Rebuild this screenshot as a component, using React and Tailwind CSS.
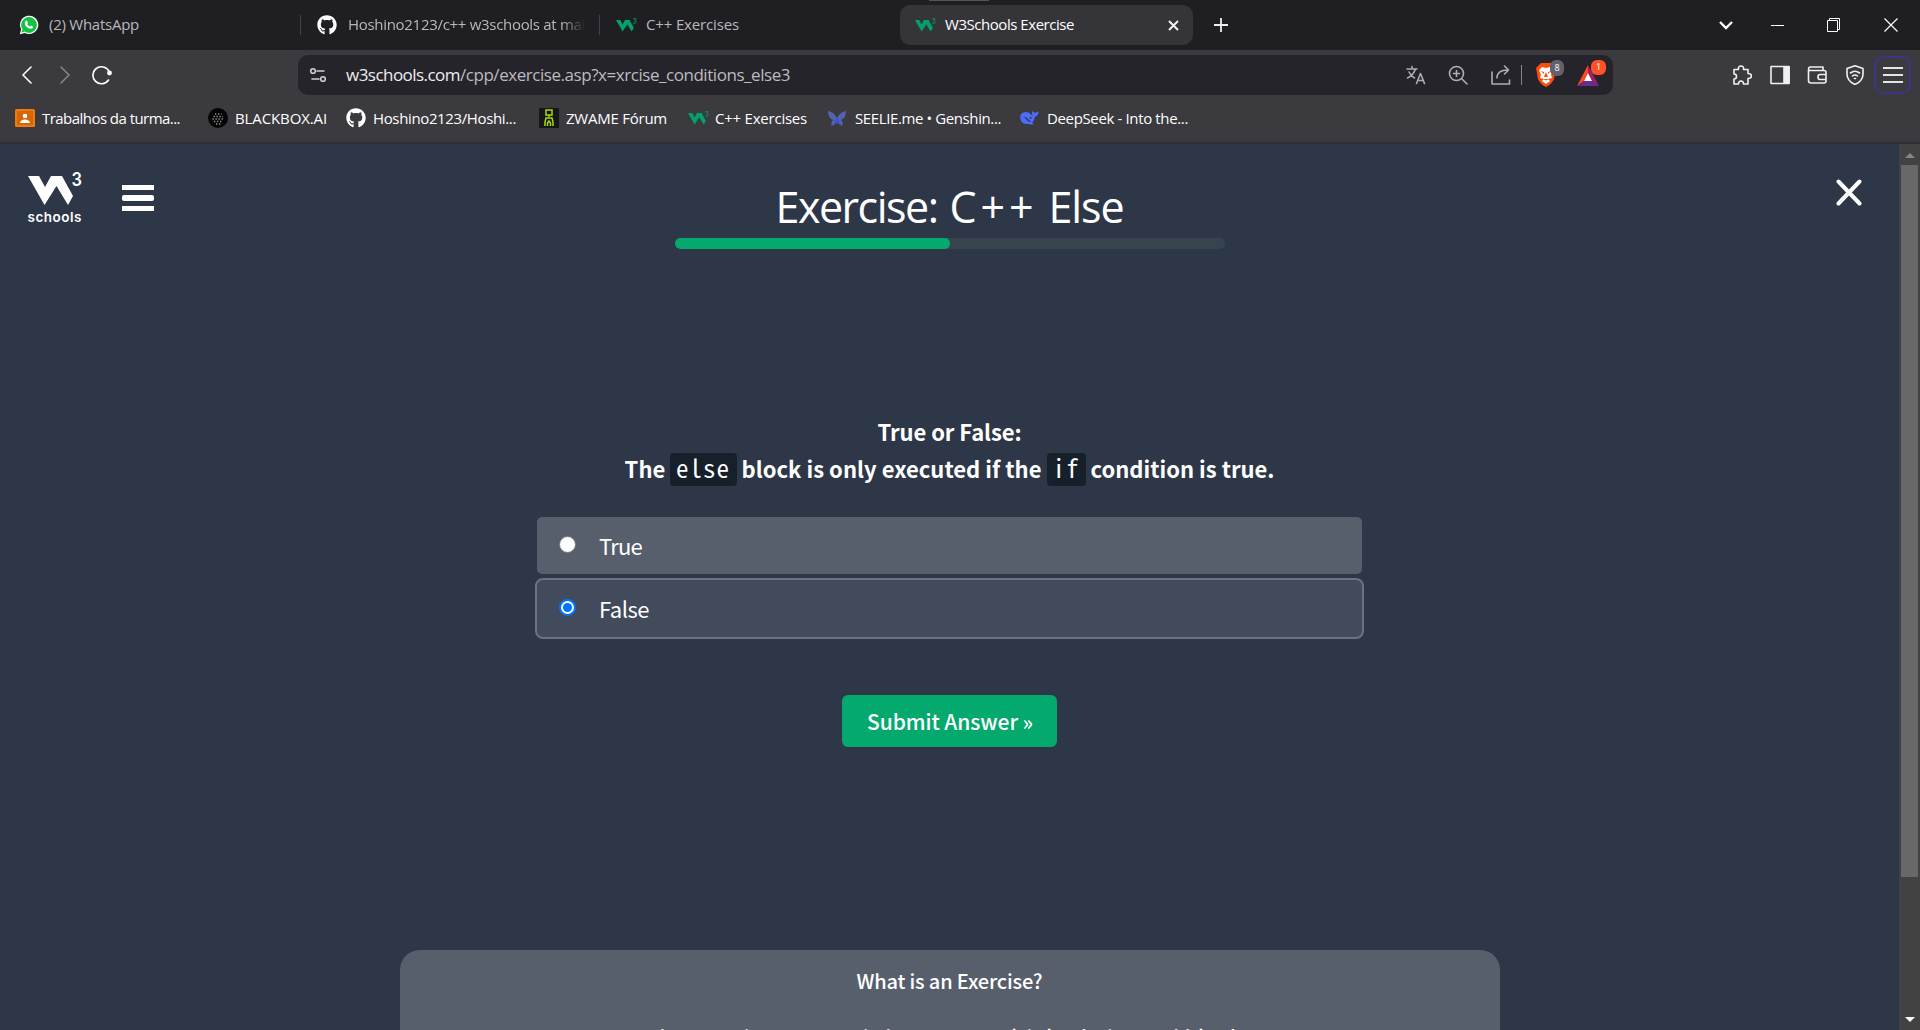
import React, { useLayoutEffect, useRef } from "react";
import { FaGithub } from "react-icons/fa";

const ui = "font-['Open_Sans','Noto_Sans',sans-serif]";
const body = "font-['Noto_Sans_CJK_SC','Noto_Sans',sans-serif]";

// Spreads the tracking of a single line so that it fills the given width.
function Fit({ w, className = "", children }) {
  const ref = useRef(null);
  useLayoutEffect(() => {
    const el = ref.current;
    const apply = () => {
      el.style.letterSpacing = "0px";
      const n = el.textContent.length;
      el.style.letterSpacing = `${(w - el.getBoundingClientRect().width) / n}px`;
    };
    apply();
    document.fonts.ready.then(apply);
  }, [w]);
  return (
    <span ref={ref} className={`inline-block shrink-0 whitespace-pre ${className}`}>
      {children}
    </span>
  );
}

const W3Mark = ({ className = "" }) => (
  <svg viewBox="0 0 54 36" className={`shrink-0 ${className}`} fill="#04a06b">
    <path d="M0 5H11L17 17L23 5H35L46 26L40 35L29 16L17 35Z" />
    <path d="M44 2H52L48 7Q53 8 52 11Q50 15 44 13" fill="none" stroke="#04a06b" strokeWidth="2.2" />
  </svg>
);

function Tabs() {
  return (
    <div className={`flex h-[50px] items-center bg-[#1f1e23] text-[15px] text-[#b9b8bc] ${ui}`}>
      <div className="flex w-[300px] items-center pl-[19px]">
        <svg viewBox="0 0 24 24" className="size-5">
          <path d="M1 23l1.6-5.8A11 11 0 1 1 7 21.500Z" fill="#fff" />
          <circle cx="12" cy="12" r="9.500" fill="#12c143" />
          <path d="M3 21l1-4 3 3Z" fill="#12c143" />
          <path d="M8 7l1.500-.3 1.300 3-1 1.200q1.200 2 3.300 3l1.200-1.200 2.800 1.300q-.2 2.500-2.800 2.600Q8 15.500 7 10.500 6.800 8.500 8 7Z" fill="#fff" />
        </svg>
        <Fit w={90} className="mb-[2px] ml-[10px]">(2) WhatsApp</Fit>
      </div>
      <div className="h-5 w-px bg-[#424147]" />
      <div className="flex w-[298px] items-center pl-4">
        <FaGithub className="size-5 shrink-0 text-white" />
        <div className="mb-[2px] ml-[11px] w-[237px] overflow-hidden [mask-image:linear-gradient(to_right,black_90%,transparent)]">
          <Fit w={246}>Hoshino2123/c++ w3schools at main</Fit>
        </div>
      </div>
      <div className="h-5 w-px bg-[#424147]" />
      <div className="flex w-[300px] items-center pl-4">
        <W3Mark className="h-[14px] w-[21px]" />
        <Fit w={93} className="mb-[2px] ml-[9px]">C++ Exercises</Fit>
      </div>
      <div className="relative flex h-10 w-[293px] items-center rounded-[10px] bg-[#353439] pl-[15px] text-white">
        <div className="absolute -top-[5px] left-[29px] h-px w-[60px] bg-[#555]" />
        <W3Mark className="h-[14px] w-[21px]" />
        <Fit w={129} className="mb-[2px] ml-[9px]">W3Schools Exercise</Fit>
        <svg viewBox="0 0 11 11" className="ml-auto mr-[14px] size-[11px]" stroke="#f2f2f2" strokeWidth="2">
          <path d="M1 1L10 10M10 1L1 10" />
        </svg>
      </div>
      <svg viewBox="0 0 14 14" className="ml-[21px] size-[14px]" stroke="#eee" strokeWidth="1.800">
        <path d="M7 0V14M0 7H14" />
      </svg>
      <div className="ml-auto flex items-center pr-[22px]">
        <svg viewBox="0 0 14 9" className="h-[9px] w-[14px]" fill="none" stroke="#fff" strokeWidth="2.400">
          <path d="M1 1L7 7L13 1" />
        </svg>
        <div className="ml-[38px] h-px w-[13px] bg-white" />
        <svg viewBox="0 0 13 14" className="ml-[43px] h-[14px] w-[13px]" fill="none" stroke="#fff">
          <path d="M.5 2.500H10.500V13.500H.5ZM2.500 2V.5H12.500V11.500H11" />
        </svg>
        <svg viewBox="0 0 14 14" className="ml-[44px] size-[14px]" stroke="#fff" strokeWidth="1.200">
          <path d="M.5 .5L13.500 13.500M13.500 .5L.5 13.500" />
        </svg>
      </div>
    </div>
  );
}

const Ico = ({ children, className = "", box = "0 0 20 20" }) => (
  <svg viewBox={box} className={`size-5 shrink-0 ${className}`} fill="none" stroke="currentColor" strokeWidth="1.600" strokeLinejoin="round" strokeLinecap="round">
    {children}
  </svg>
);

function Toolbar() {
  return (
    <div className={`flex h-[50px] items-center bg-[#3b3a3f] ${ui}`}>
      <div className="flex w-[298px] items-center pl-[17px]">
        <Ico className="text-white"><path d="M14 2L6 10L14 18" /></Ico>
        <Ico className="ml-[18px] text-[#858489]"><path d="M6 2L14 10L6 18" /></Ico>
        <Ico className="ml-[17px] text-white">
          <path d="M16.500 15A8.500 8.500 0 1 1 17.500 7.500" />
          <circle cx="17.500" cy="8" r="1.600" fill="currentColor" />
        </Ico>
      </div>
      <div className="flex h-10 w-[1315px] items-center rounded-[10px] bg-[#25242a] text-[#cfced3]">
        <Ico className="ml-[11px]">
          <circle cx="4" cy="6" r="2.300" /><path d="M8 6H15" /><circle cx="14" cy="14" r="2.300" /><path d="M3 14H10" />
        </Ico>
        <div className="ml-[17px] flex text-[17px]">
          <Fit w={114} className="text-[#eeeeef]">w3schools.com</Fit>
          <Fit w={330} className="text-[#bcbbc0]">/cpp/exercise.asp?x=xrcise_conditions_else3</Fit>
        </div>
        <div className="ml-auto flex items-center pr-[6px]">
          <Ico className="text-[#aeadb2]">
            <path d="M1 4H11M6 1.500V4M9.500 4Q7.500 10 1.500 13M3 7Q5 11 8.500 13M10.500 18.500L14.500 8.500L18.500 18.500M12 15.500H17" />
          </Ico>
          <Ico className="ml-[22px] text-[#aeadb2]">
            <circle cx="8.500" cy="8.500" r="7" /><path d="M14 14L19 19M8.500 5.500V11.500M5.500 8.500H11.500" />
          </Ico>
          <Ico className="ml-[23px] text-[#aeadb2]">
            <path d="M1 7V19H18.500V15M6 13Q6 5 17 5M13.500 1L17.500 5L13.500 9" />
          </Ico>
          <div className="ml-[10px] h-5 w-px bg-[#858489]" />
          <div className="relative ml-[14px] flex w-[20px]">
            <svg viewBox="0 0 20 24" className="h-6 w-5">
              <path d="M5 0H15L20 5L18 16Q16 21 10 24Q4 21 2 16L0 5Z" fill="#fb4d12" />
              <path d="M6 4L10 5L14 4L17 7L15 12L16 15L12 16L14 18L10 21L6 18L8 16L4 15L5 12L3 7Z" fill="#fff" />
              <path d="M5 8L8 9V11ZM15 8L12 9V11ZM10 9L12 14H8ZM7 16L10 17.500L13 16" fill="#fb4d12" />
            </svg>
            <div className="absolute -top-[3px] left-[14px] flex h-4 w-[14px] items-center justify-center rounded-[6px] bg-[#62616d] text-[9px] text-white">8</div>
          </div>
          <div className="relative ml-[21px] flex">
            <svg viewBox="0 0 22 21" className="h-[21px] w-[22px]">
              <path d="M11 0L0 21L7 16L11 8Z" fill="#ff4724" />
              <path d="M11 0L22 21L15 16L11 8Z" fill="#9e1f63" />
              <path d="M0 21H22L15 16H7Z" fill="#662d91" />
              <path d="M11 8L15 16H7Z" fill="#fff" />
            </svg>
            <div className="absolute -top-[5px] left-[14px] flex size-[15px] items-center justify-center rounded-[6px] bg-[#ff5229] text-[9px] text-white">1</div>
          </div>
          <div className="w-2" />
        </div>
      </div>
      <div className="ml-auto flex items-center pr-[9px] text-[#f0f0f1]">
        <Ico>
          <path d="M2 4.500H6.500Q6 1 9 1T11.500 4.500H16V8.500Q19.500 8.500 19.500 11T16 13.500V19H11.500Q11.500 16 9 16T6.500 19H2V14Q4.500 14 4.500 11.500T2 9Z" />
        </Ico>
        <Ico className="ml-[18px]">
          <path d="M1 1.500H19V18.500H1Z" /><path d="M14 2H19V18H14Z" fill="currentColor" />
        </Ico>
        <Ico className="ml-[17px]">
          <path d="M1.500 5V15.500Q1.500 18 4 18H17Q19 18 19 16V7.500Q19 5.500 17 5.500H3Q1.500 5.500 1.500 4T3 2H16V5M19 9.500H13Q11 9.500 11 12T13 14.500H19" />
        </Ico>
        <Ico className="ml-[18px]">
          <path d="M10 0.800L18 3.500V9Q18 16 10 19.500Q2 16 2 9V3.500ZM5.500 8Q10 4.500 14.500 8M7.500 11Q10 9 12.500 11M9.500 13.500H10.500" />
        </Ico>
        <div className="ml-[9px] flex h-[38px] w-[37px] flex-col items-center justify-center gap-[5px] rounded-[10px] border-2 border-[#393688]">
          <div className="h-[2px] w-5 bg-[#e4e4e5]" />
          <div className="h-[2px] w-5 bg-[#e4e4e5]" />
          <div className="h-[2px] w-5 bg-[#e4e4e5]" />
        </div>
      </div>
    </div>
  );
}

function Bookmark({ slot, w, label, gap, children }) {
  return (
    <div className={`flex shrink-0 items-center ${slot}`}>
      {children}
      <Fit w={w} className={gap}>{label}</Fit>
    </div>
  );
}

function Bookmarks() {
  return (
    <div className={`flex h-[44px] items-start border-b-2 border-[#2f2e34] bg-[#3b3a3f] pt-[7px] pl-[15px] text-[15px] text-white ${ui}`}>
      <Bookmark slot="w-[193px]" w={138} gap="ml-[7px]" label="Trabalhos da turma...">
        <svg viewBox="0 0 20 18" className="h-[18px] w-5">
          <rect width="20" height="18" rx="1.500" fill="#ee7b12" /><rect x="2" y="2" width="16" height="14" fill="#d96403" />
          <circle cx="10" cy="7" r="2.300" fill="#fff" /><path d="M5 14Q5.500 10.500 10 10.500T15 14Z" fill="#fff" />
        </svg>
      </Bookmark>
      <Bookmark slot="w-[138px]" w={92} gap="ml-[7px]" label="BLACKBOX.AI">
        <svg viewBox="0 0 20 20" className="size-5">
          <circle cx="10" cy="10" r="10" fill="#050505" />
          <g fill="none" stroke="#999" strokeWidth="1.300" strokeDasharray="1.300 1.700">
            <path d="M7 6H13.500M5.500 8.500H15M4.500 11H16M6 13.500H15M8 16H13" />
          </g>
        </svg>
      </Bookmark>
      <Bookmark slot="w-[193px]" w={143} gap="ml-[7px]" label="Hoshino2123/Hoshi...">
        <FaGithub className="size-5" />
      </Bookmark>
      <Bookmark slot="w-[149px]" w={101} gap="ml-[7px]" label="ZWAME Fórum">
        <svg viewBox="0 0 20 20" className="size-5" fill="none" stroke="#a8d80d" strokeWidth="1.500">
          <rect width="20" height="20" fill="#17171a" stroke="none" />
          <path d="M7 2H13V7H7ZM10 7V9M6 18V14L7 10H13L14 14V18M8.500 18V15L10 13L11.500 15V18" />
        </svg>
      </Bookmark>
      <Bookmark slot="w-[139px]" w={92} gap="ml-[6px]" label="C++ Exercises">
        <W3Mark className="h-[14px] w-[21px]" />
      </Bookmark>
      <Bookmark slot="w-[192px]" w={146} gap="ml-[8px]" label="SEELIE.me • Genshin...">
        <svg viewBox="0 0 20 18" className="h-[18px] w-5">
          <path d="M1 2Q7 3 10 9Q13 3 19 2Q19 9 14 11Q17 14 15 17Q12 16 10 12Q8 16 5 17Q3 14 6 11Q1 9 1 2Z" fill="#5561ad" />
          <path d="M10 8L13 13L10 15L7 13Z" fill="#3c50e0" />
        </svg>
      </Bookmark>
      <Bookmark slot="" w={141} gap="ml-[8px]" label="DeepSeek - Into the...">
        <svg viewBox="0 0 24 20" className="h-4 w-5">
          <path d="M1 9Q1 3 8 2.500Q12 2.500 14 5Q15 7 17 7Q15 5 16 1Q18 4 20 3.500Q22 3 24 1.500Q24 7 19.500 8.500Q19 13 16 15.500L18 17.500Q15 19 12 17.500Q1 18.500 1 9Z" fill="#4d6bfe" />
          <path d="M5 8.500Q8 8 11 11.500Q13 14 15 14.500Q11 15.500 8.500 12Q7 9.500 5 8.500Z" fill="#3b3a3f" />
          <circle cx="14" cy="10" r="1.200" fill="#3b3a3f" />
        </svg>
      </Bookmark>
    </div>
  );
}

function Option({ label, w, checked }) {
  return (
    <div
      className={
        checked
          ? "-mx-[2px] mt-1 flex h-[61px] items-center rounded-[8px] border-2 border-[#6c7380] bg-[#424b5c] pl-[22px]"
          : "flex h-[57px] items-center rounded-[5px] bg-[#585f6c] pl-[22px]"
      }
    >
      {checked ? (
        <div className="mb-[3px] flex size-[17px] items-center justify-center rounded-full border-2 border-[#0075ff] bg-white">
          <div className="size-[9px] rounded-full bg-[#0075ff]" />
        </div>
      ) : (
        <div className="mb-[3px] size-[17px] rounded-full border border-[#767676] bg-white" />
      )}
      <Fit w={w} className="mb-[2px] ml-[23px] text-[22px] leading-none">{label}</Fit>
    </div>
  );
}

const Code = ({ className, children }) => (
  <code className={`h-[33px] shrink-0 rounded-[4px] bg-[#16202a] text-center font-['Noto_Sans_Mono_CJK_SC','DejaVu_Sans_Mono',monospace] text-[25px] leading-[29px] font-normal tracking-[1px] ${className}`}>
    {children}
  </code>
);

function Page() {
  return (
    <div className={`flex h-[886px] overflow-hidden bg-[#2d3748] text-white ${body}`}>
      <div className="relative flex grow flex-col items-center">
        <div className="absolute top-[26px] left-[28px]">
          <svg viewBox="0 0 56 54" className="h-[54px] w-[56px] overflow-visible" fill="#fff">
            <path d="M0 6H11L17 17L23 6H34L45 26L40 35L28.500 16L16.500 35Z" />
            <text x="43.500" y="16" fontFamily="Inter" fontSize="19" fontWeight="600" textLength="10.500" lengthAdjust="spacingAndGlyphs">3</text>
            <text x="-.5" y="51.500" fontFamily="Inter" fontSize="13.500" fontWeight="600" textLength="54">schools</text>
          </svg>
        </div>
        <div className="absolute top-[41px] left-[122px] flex w-8 flex-col gap-[5px]">
          <div className="h-[5px] bg-white" />
          <div className="h-[6px] rounded-[2px] bg-white" />
          <div className="h-[5px] bg-white" />
        </div>
        <svg viewBox="0 0 26 27" className="absolute top-[35px] right-[37px] h-[27px] w-[26px]" stroke="#fff" strokeWidth="4" strokeLinecap="round">
          <path d="M2.500 2.500L23.500 24.500M23.500 2.500L2.500 24.500" />
        </svg>

        <h1 className={`mt-[32px] flex h-[62px] shrink-0 text-[43px] leading-[61px] ${ui}`}>
          <Fit w={162}>Exercise:</Fit>
          <Fit w={88} className="ml-[12px]">C++</Fit>
          <Fit w={75} className="ml-[11px]">Else</Fit>
        </h1>
        <div className="h-[11px] w-[550px] shrink-0 overflow-hidden rounded-[5px] bg-[#38444d]">
          <div className="h-full w-1/2 rounded-[5px] bg-[#04aa6d]" />
        </div>

        <div className="mt-[164px] flex h-[104px] shrink-0 flex-col items-center text-[22px] leading-[37px] font-bold">
          <Fit w={144}>True or False:</Fit>
          <div className="flex h-[38px] items-center justify-center">
            <Fit w={41} className="mb-[1px]">The</Fit>
            <Code className="ml-[4px] w-[67px]">else</Code>
            <Fit w={300} className="mb-[1px] ml-[5px]">block is only executed if the</Fit>
            <Code className="ml-[5px] w-[39px]">if</Code>
            <Fit w={184} className="mb-[1px] ml-[5px]">condition is true.</Fit>
          </div>
        </div>

        <div className="w-[825px] shrink-0">
          <Option label="True" w={43} />
          <Option label="False" w={50} checked />
        </div>

        <button className="mt-[56px] h-[52px] w-[215px] shrink-0 rounded-[6px] bg-[#04aa6d] pl-px text-[21px] leading-[51px] font-medium">
          <Fit w={166}>Submit Answer »</Fit>
        </button>

        <div className="mt-[203px] flex h-[300px] w-[1100px] shrink-0 flex-col items-center rounded-[20px] bg-[#585f6c] text-[20px] font-medium">
          <Fit w={186} className="mt-[16px] leading-[30px]">What is an Exercise?</Fit>
          <Fit w={606} className="mt-[26px] leading-[30px]">The exercises are a mix between multiple choice and blanks</Fit>
        </div>
      </div>

      <div className="flex w-[21px] shrink-0 flex-col items-center bg-[#424242]">
        <svg viewBox="0 0 10 5" className="mt-[9px] h-[5px] w-[10px]" fill="#868686"><path d="M5 0L10 5H0Z" /></svg>
        <div className="mt-[7px] h-[712px] w-[17px] bg-[#686868]" />
        <svg viewBox="0 0 10 5" className="mt-auto mb-[8px] h-[5px] w-[10px]" fill="#fff"><path d="M0 0H10L5 5Z" /></svg>
      </div>
    </div>
  );
}

export default function App() {
  return (
    <div className="h-[1030px] w-[1920px] overflow-hidden bg-[#2d3748]">
      <Tabs />
      <Toolbar />
      <Bookmarks />
      <Page />
    </div>
  );
}
